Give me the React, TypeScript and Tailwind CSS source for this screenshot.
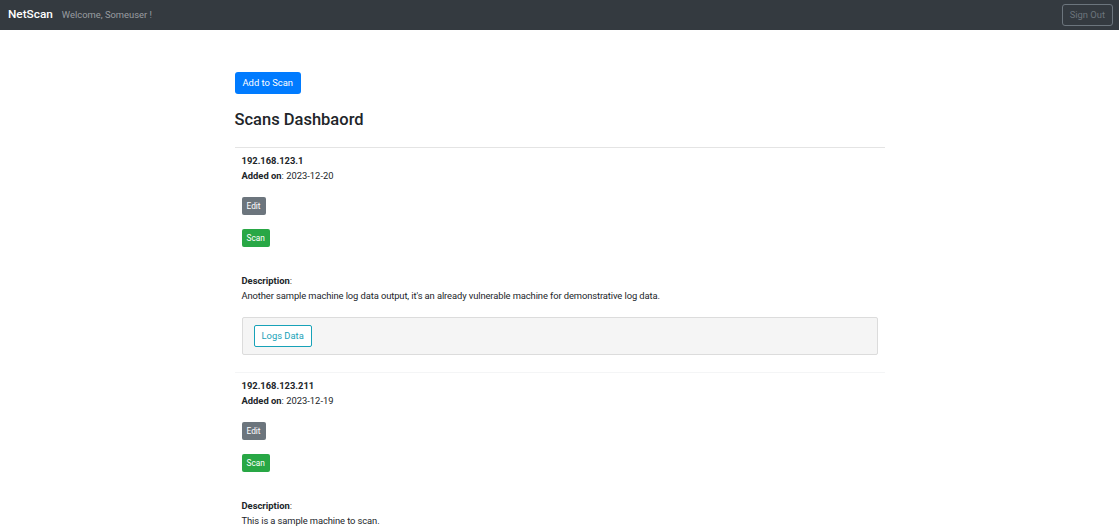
import React from 'react';

interface Machine {
  ip: string;
  added: string;
  description: string;
  showLogs: boolean;
}

const machines: Machine[] = [
  {
    ip: '192.168.123.1',
    added: '2023-12-20',
    description:
      "Another sample machine log data output, it's an already vulnerable machine for demonstrative log data.",
    showLogs: true,
  },
  {
    ip: '192.168.123.211',
    added: '2023-12-19',
    description: 'This is a sample machine to scan.',
    showLogs: true,
  },
];

function Navbar() {
  return (
    <nav className="flex h-[30px] items-center justify-between bg-[#343a40] pl-[8px] pr-[6px]">
      <div className="flex items-center">
        <span className="text-[11.8px] font-medium leading-none text-white">NetScan</span>
        <span className="ml-[9px] text-[9.4px] leading-none text-[#9a9da0]">Welcome, Someuser !</span>
      </div>
      <button className="flex h-[22px] items-center rounded-[3px] border border-[#6c757d] px-[7px] text-[9.4px] text-[#6c757d]">
        Sign Out
      </button>
    </nav>
  );
}

function MachineItem({ machine, first }: { machine: Machine; first: boolean }) {
  return (
    <div className={first ? 'border-t border-[#e4e4e4]' : 'border-t border-[#f4f5f6]'}>
      <div className="px-[7px] pt-[6px] text-[9.4px] leading-[14.5px] text-[#212529]">
        <div className="font-bold">{machine.ip}</div>
        <div>
          <span className="font-bold">Added on</span>: {machine.added}
        </div>
        <div className="mt-[14px] flex flex-col items-start gap-[14px]">
          <button className="flex h-[18px] items-center rounded-[2px] bg-[#6c757d] px-[5px] text-[8.3px] text-white">
            Edit
          </button>
          <button className="flex h-[18px] items-center rounded-[2px] bg-[#28a745] px-[5px] text-[8.3px] text-white">
            Scan
          </button>
        </div>
        <div className="mt-[27px]">
          <span className="font-bold">Description</span>:
        </div>
        <div className="tracking-[-0.1px]">{machine.description}</div>
        {machine.showLogs && (
          <div className="mt-[14px] rounded-[2px] border border-[#dcdcdc] bg-[#f5f5f5] px-[11px] py-[7px]">
            <button className="flex h-[22px] items-center rounded-[2px] border border-[#17a2b8] bg-white px-[7px] text-[9.4px] text-[#17a2b8]">
              Logs Data
            </button>
          </div>
        )}
        <div className="h-[17px]" />
      </div>
    </div>
  );
}

export default function App() {
  return (
    <div className="min-h-screen bg-white font-['Roboto',sans-serif]">
      <Navbar />
      <main className="mx-auto w-[650px] pt-[42px]">
        <button className="flex h-[22px] items-center rounded-[3px] bg-[#007bff] px-[8px] text-[9.4px] text-white">
          Add to Scan
        </button>
        <h3 className="mt-[15px] mb-[17px] text-[16.5px] font-medium leading-[21px] text-[#212529]">
          Scans Dashbaord
        </h3>
        {machines.map((m, i) => (
          <MachineItem key={m.ip} machine={m} first={i === 0} />
        ))}
      </main>
    </div>
  );
}
